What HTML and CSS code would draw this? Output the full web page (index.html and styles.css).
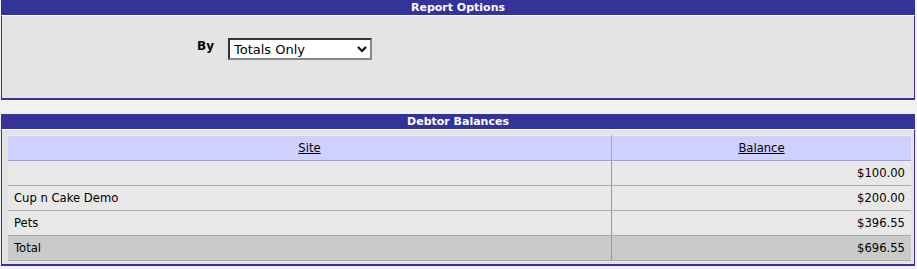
FILE: index.html
```html
<!DOCTYPE html>
<html lang="en">
<head>
    <meta charset="UTF-8">
    <title>Debtor Balances</title>
    <link rel="stylesheet" href="styles.css">
</head>
<body>
    <div class="panel options">
        <div class="panel-head">Report Options</div>
        <div class="panel-body">
            <div class="field">
                <label for="by">By</label>
                <select id="by" name="by">
                    <option>Totals Only</option>
                    <option>Detail</option>
                </select>
            </div>
        </div>
    </div>

    <div class="panel">
        <div class="panel-head">Debtor Balances</div>
        <div class="panel-body results">
            <table class="grid">
                <thead>
                    <tr><th class="site"><a href="#">Site</a></th><th><a href="#">Balance</a></th></tr>
                </thead>
                <tbody>
                    <tr><td class="site"></td><td class="num">$100.00</td></tr>
                    <tr><td class="site">Cup n Cake Demo</td><td class="num">$200.00</td></tr>
                    <tr><td class="site">Pets</td><td class="num">$396.55</td></tr>
                    <tr class="total"><td class="site">Total</td><td class="num">$696.55</td></tr>
                </tbody>
            </table>
        </div>
    </div>
</body>
</html>
```

FILE: styles.css
```css
body { margin: 0; background: #f2f2f3; font-family: "DejaVu Sans", Verdana, sans-serif; font-size: 11.6px; color: #000; }
.panel { margin-left: 1px; width: 914px; }
.options { margin-bottom: 14px; }
.panel-head { background: #333399; color: #fff; font-weight: bold; text-align: center; height: 15px; line-height: 16px; font-size: 11px; }
.panel-body { background: #e4e4e4; border: 1px solid #333399; border-top: 1px solid #fff; }
.options .panel-body { height: 82px; border-bottom-width: 2px; }
.field { display: flex; align-items: flex-start; padding: 21px 0 0 195px; }
.field label { font-weight: bold; font-size: 12px; width: 31px; padding-top: 2px; }
.field select { width: 144px; height: 22px; font-family: inherit; font-size: 13px; background: #fff; border: 2px inset #888; margin-top: 1px; }
.results { padding: 5px 2px 3px 6px; border-bottom-width: 2px; }
.grid { width: 903px; border-collapse: collapse; }
.grid th { background: #d0d0ff; font-weight: normal; height: 24px; padding: 0; text-align: center; border-bottom: 1px solid #a0a0c8; border-top: 1px solid #e8e8ff; }
.grid th a { color: #000; }
.grid td { background: #e8e8e8; height: 24px; padding: 0 6px; border-bottom: 1px solid #aaa; }
.grid .site { width: 591px; border-right: 1px solid #999; }
.grid th.site { border-right: 1px solid #aaa; }
.grid .num { text-align: right; }
.grid .total td { background: #cacaca; }
```
